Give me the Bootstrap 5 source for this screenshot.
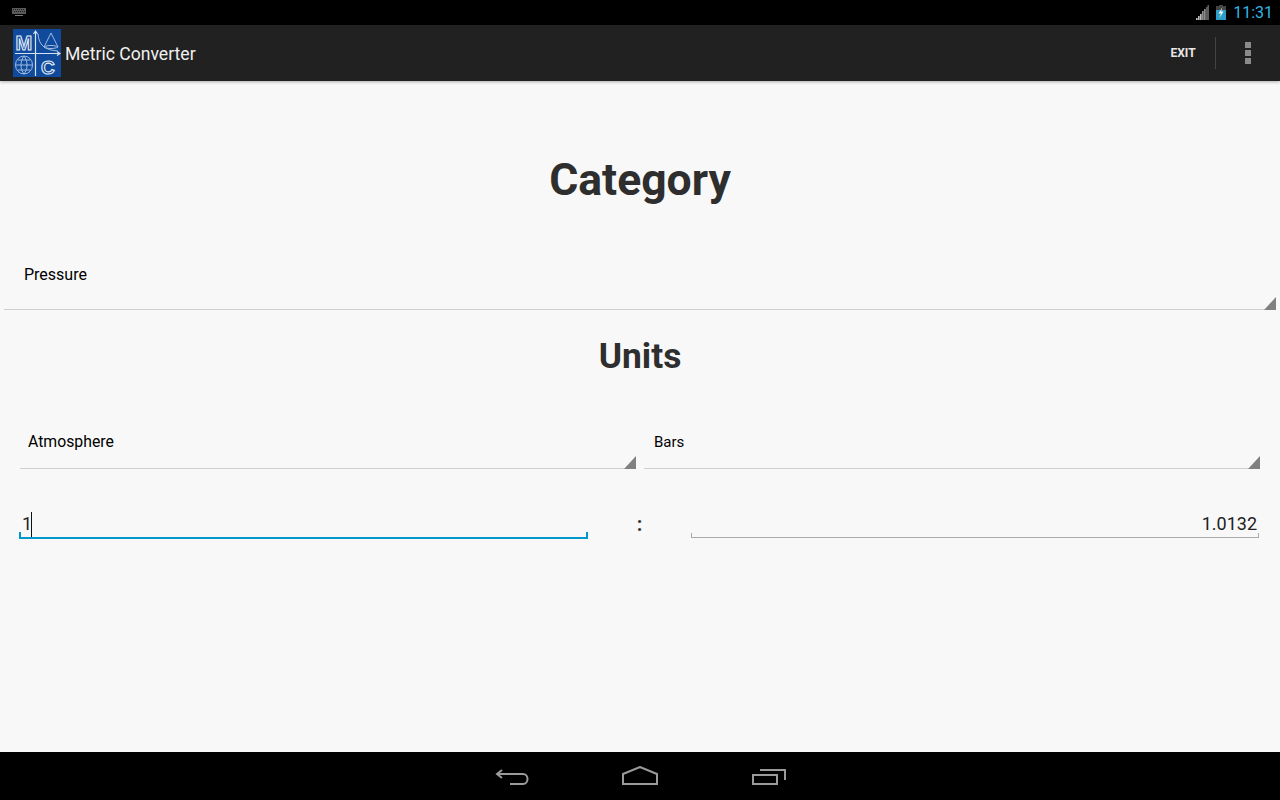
<!DOCTYPE html>
<html lang="en">
<head>
    <meta charset="UTF-8">
    <title>Metric Converter</title>
    <link href="https://cdn.jsdelivr.net/npm/bootstrap@5.3.0/dist/css/bootstrap.min.css" rel="stylesheet">
    <style>
        html, body { height: 100%; }
        body { font-family: Roboto, sans-serif; background: #f8f8f8; color: #000; }
        .screen { height: 800px; }
        .status-bar { height: 25px; background: #000; padding: 0 7px 0 12px; }
        .status-clock { color: #33b5e5; font-size: 16px; line-height: 25px; margin-left: 7px; }
        .battery-icon { margin-left: 7px; }
        .action-bar { height: 56px; background: #212121; box-shadow: 0 1px 3px rgba(0,0,0,.3); padding-left: 13px; position: relative; }
        .app-title { color: #f0f0f0; font-size: 17.6px; margin: 2px 0 0 4px; }
        .exit-label { color: #e8e8e8; font-size: 12px; font-weight: 700; width: 64px; text-align: center; }
        .action-sep { width: 1px; height: 32px; background: #444; }
        .overflow-box { width: 64px; }
        .main-area { background: #f8f8f8; }
        .head-big { font-size: 44.5px; font-weight: 700; color: #2e2e2e; line-height: 54px; margin: 0; padding-top: 72px; }
        .head-mid { font-size: 35.4px; font-weight: 700; color: #2e2e2e; line-height: 40px; margin: 0; padding-top: 26px; }
        .spin { position: relative; border-bottom: 1px solid #d0d0d0; font-size: 16px; }
        .spin-tri { position: absolute; right: 0; bottom: -1px; width: 0; height: 0; border-left: 12px solid transparent; border-bottom: 13px solid #808080; }
        .spin-cat { margin: 38px 4px 0; height: 65px; padding: 20px 0 0 20px; line-height: 20px; }
        .units-row { margin: 48px 20px 0; gap: 8px; }
        .spin-unit { height: 45px; flex: 0 0 616px; font-size: 15.8px; line-height: 20px; padding-top: 8px; padding-left: 8px; }
        .spin-unit.second { padding-left: 10px; font-size: 15px; }
        .values-row { margin: 30px 21px 0 19px; }
        .val-field { position: relative; flex: 0 0 569px; height: 40px; font-size: 18px; line-height: 24px; padding: 13px 2px 0 3px; color: #222; }
        .val-active { border-bottom: 2px solid #0099cc; }
        .val-idle { border-bottom: 1px solid #aaa; flex: 1 1 0; height: 39px; }
        .tick { position: absolute; bottom: 0; width: 1px; height: 4px; }
        .val-active .tick { background: #0099cc; width: 2px; height: 5px; }
        .val-idle .tick { background: #aaa; }
        .tick-l { left: 0; }
        .tick-r { right: 0; }
        .caret-bar { display: inline-block; width: 1px; height: 25px; background: #111; vertical-align: -7px; margin-left: -1px; }
        .colon { width: 103px; text-align: center; font-size: 20px; font-weight: 700; color: #333; line-height: 24px; padding-top: 13px; }
        .nav-bar { height: 48px; background: #000; }
        .nav-gap { gap: 92px; }
    </style>
</head>
<body>
    <div class="screen d-flex flex-column">
        <div class="status-bar d-flex align-items-center">
            <svg width="15" height="9" viewBox="0 0 15 9">
                <rect x="0" y="0" width="14" height="6" fill="#5a5a5a"/>
                <path d="M1 1h1v1H1zM3 1h1v1H3zM5 1h1v1H5zM7 1h1v1H7zM9 1h1v1H9zM11 1h1v1h-1zM2 3h1v1H2zM4 3h1v1H4zM6 3h1v1H6zM8 3h1v1H8zM10 3h1v1h-1zM12 3h1v1h-1z" fill="#222"/>
                <rect x="3" y="7" width="8" height="1" fill="#777"/>
            </svg>
            <div class="ms-auto d-flex align-items-center">
                <svg width="13" height="15" viewBox="0 0 13 15">
                    <path d="M0 15L13 0V15Z" fill="#3a3a3a"/>
                    <path d="M0 13h1.500v2H0zM2 11h1.500v4H2zM4 9h1.500v6H4z" fill="#bbb"/>
                    <path d="M6 6h1.500v9H6zM8 4h1.500v11H8z" fill="#8e8e8e"/>
                    <path d="M10 2h1.500v13H10zM11.500 0H13v15h-1.500z" fill="#5c5c5c"/>
                </svg>
                <svg width="10" height="15" viewBox="0 0 10 15" class="battery-icon">
                    <rect x="3" y="0" width="4" height="1" fill="#444"/>
                    <rect x="0" y="1" width="10" height="4" fill="#444"/>
                    <rect x="0" y="5" width="10" height="10" fill="#2f9fc9"/>
                    <path d="M6.500 2L2.500 8.500H5L3.500 13L7.500 6.500H5Z" fill="#fff"/>
                </svg>
                <span class="status-clock">11:31</span>
            </div>
        </div>
        <div class="action-bar d-flex align-items-center">
            <svg width="48" height="48" viewBox="0 0 48 48">
                <rect width="48" height="48" fill="#0f4a9c"/>
                <g fill="none" stroke="#d5e2f2" stroke-width="1">
                    <path d="M2 24.500H46M44 22.500l3 2-3 2M22.500 2V47M20.500 5l2-3 2 3" stroke-width="1.200"/>
                    <path d="M25 5c1 11 6 16 20 17" stroke="#9fbbe0"/>
                    <path d="M31 18l7-14 7 14c-3 2-11 2-14 0ZM31 18c3-2 11-2 14 0" stroke="#9fbbe0"/>
                    <ellipse cx="11" cy="36" rx="8.500" ry="9" stroke="#9fbbe0"/>
                    <path d="M3 36h16M5 31h12M5 41h12M11 27c-4 5-4 13 0 18M11 27c4 5 4 13 0 18" stroke="#9fbbe0"/>
                </g>
                <text x="2.500" y="21" font-family="Liberation Sans, sans-serif" font-weight="700" font-size="20" fill="#0f4a9c" stroke="#e2eaf5" stroke-width="1.100">M</text>
                <text x="28" y="45" font-family="Liberation Sans, sans-serif" font-weight="700" font-size="19" fill="#0f4a9c" stroke="#e2eaf5" stroke-width="1.100">C</text>
            </svg>
            <span class="app-title">Metric Converter</span>
            <div class="ms-auto d-flex align-items-center">
                <span class="exit-label">EXIT</span>
                <span class="action-sep"></span>
                <div class="overflow-box d-flex flex-column align-items-center">
                    <svg width="6" height="22" viewBox="0 0 6 22">
                        <path d="M0 0h6v6H0zM0 8h6v6H0zM0 16h6v6H0z" fill="#8a8a8a"/>
                    </svg>
                </div>
            </div>
        </div>
        <div class="main-area flex-grow-1">
            <h1 class="head-big text-center">Category</h1>
            <div class="spin spin-cat">Pressure<span class="spin-tri"></span></div>
            <h2 class="head-mid text-center">Units</h2>
            <div class="units-row d-flex">
                <div class="spin spin-unit">Atmosphere<span class="spin-tri"></span></div>
                <div class="spin spin-unit second">Bars<span class="spin-tri"></span></div>
            </div>
            <div class="values-row d-flex">
                <div class="val-field val-active">1<span class="caret-bar"></span><span class="tick tick-l"></span><span class="tick tick-r"></span></div>
                <div class="colon">:</div>
                <div class="val-field val-idle text-end">1.0132<span class="tick tick-l"></span><span class="tick tick-r"></span></div>
            </div>
        </div>
        <div class="nav-bar d-flex justify-content-center align-items-center nav-gap">
            <svg width="36" height="20" viewBox="0 0 36 20" fill="none" stroke="#9a9a9a" stroke-width="2">
                <path d="M8 4L3 8l5 4M3 8h26c6 0 6 10 0 10H16"/>
            </svg>
            <svg width="36" height="20" viewBox="0 0 36 20" fill="none" stroke="#9a9a9a" stroke-width="2">
                <path d="M1 18V8L18 1l17 7v10Z"/>
            </svg>
            <svg width="36" height="20" viewBox="0 0 36 20" fill="none" stroke="#9a9a9a" stroke-width="2">
                <path d="M3 9h24v9H3ZM10 4h25v10"/>
            </svg>
        </div>
    </div>
    <script src="https://cdn.jsdelivr.net/npm/bootstrap@5.3.0/dist/js/bootstrap.bundle.min.js"></script>
</body>
</html>
